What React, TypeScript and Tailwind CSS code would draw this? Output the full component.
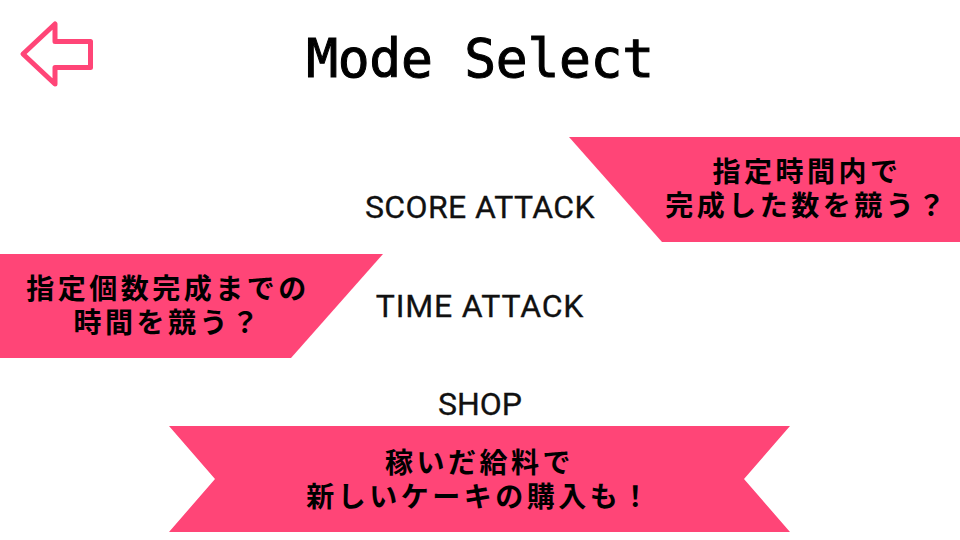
import React from "react";

const PINK = "#ff4577";

function BackArrow() {
  return (
    <svg width="100" height="100" viewBox="0 0 100 100" className="block">
      <polygon
        points="23,54 55,24 55,41.5 90.5,41.5 90.5,67.5 55,67.5 55,84"
        fill="none"
        stroke={PINK}
        strokeWidth="5"
        strokeLinejoin="round"
      />
    </svg>
  );
}

const jp = "[font-family:'Noto_Sans_CJK_JP',sans-serif] font-bold text-[28px] leading-[34px] tracking-[3.5px] text-black text-center";
const en = "[font-family:Roboto,'Liberation_Sans',sans-serif] text-[32px] leading-[32px] text-[#111] [-webkit-text-stroke:0.3px_#111]";

export default function App() {
  return (
    <div className="w-[960px] h-[540px] bg-white overflow-hidden flex flex-col">
      {/* header */}
      <div className="grid grid-cols-[1fr_auto_1fr] h-[137px]">
        <div>
          <BackArrow />
        </div>
        <div className="pt-[32px] [font-family:'DejaVu_Sans_Mono',monospace] text-[53px] leading-[53px] tracking-[-0.3px] text-black [-webkit-text-stroke:1px_black]">
          Mode Select
        </div>
        <div />
      </div>

      {/* row 1 */}
      <div className="grid h-[105px]">
        <div className="[grid-area:1/1] justify-self-end w-[391px] h-[105px] flex items-center justify-center pl-[85px] pb-[5px] bg-[#ff4577] [clip-path:polygon(0_0,100%_0,100%_100%,93px_100%)]">
          <div className={jp}>
            指定時間内で
            <br />
            完成した数を競う？
          </div>
        </div>
        <div className={`[grid-area:1/1] justify-self-center self-start mt-[54px] tracking-[0.4px] ${en}`}>
          SCORE ATTACK
        </div>
      </div>

      <div className="h-[12px]" />

      {/* row 2 */}
      <div className="grid h-[104px]">
        <div className="[grid-area:1/1] justify-self-start w-[383px] h-[104px] flex items-center justify-center pr-[47px] pb-[4px] bg-[#ff4577] [clip-path:polygon(0_0,100%_0,291px_100%,0_100%)]">
          <div className={jp}>
            指定個数完成までの
            <br />
            時間を競う？
          </div>
        </div>
        <div className={`[grid-area:1/1] justify-self-center self-start mt-[36px] tracking-[0.8px] ${en}`}>
          TIME ATTACK
        </div>
      </div>

      {/* row 3 */}
      <div className="h-[68px] flex justify-center">
        <div className={`mt-[30px] ${en}`}>SHOP</div>
      </div>

      {/* ribbon */}
      <div className="flex justify-center">
        <div className="w-[621px] h-[106px] ml-[-1px] bg-[#ff4577] flex items-center justify-center pb-[2px] [clip-path:polygon(0_0,100%_0,calc(100%-46px)_50%,100%_100%,0_100%,46px_50%)]">
          <div className={jp}>
            稼いだ給料で
            <br />
            新しいケーキの購入も！
          </div>
        </div>
      </div>
    </div>
  );
}
